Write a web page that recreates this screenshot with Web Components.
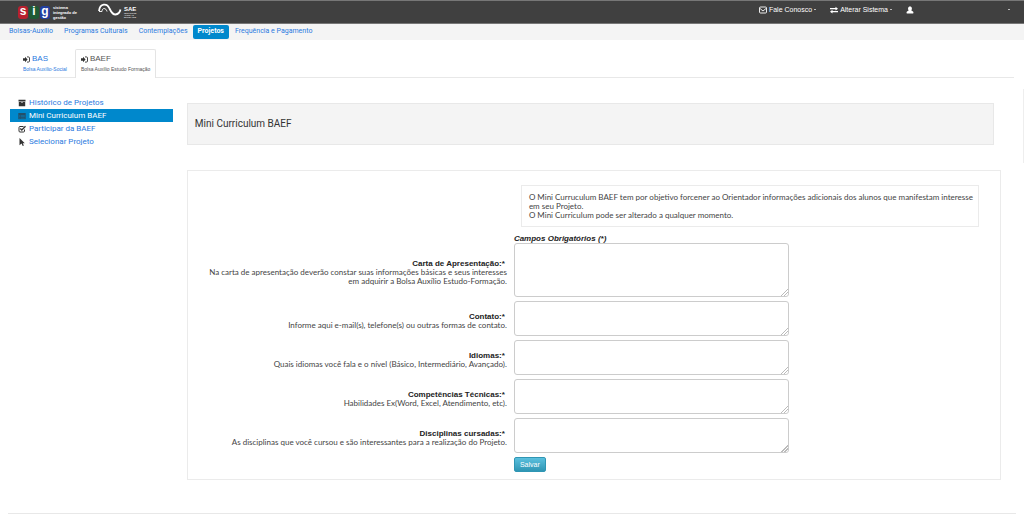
<!DOCTYPE html>
<html lang="pt-BR">
<head>
<meta charset="utf-8">
<title>SIG - Mini Curriculum BAEF</title>
<style>
body{margin:0;background:#fff;color:#444;font:8px/9px Roboto,Arial,sans-serif}
main{display:grid;grid-template-columns:1fr 5fr;gap:14px;padding:0 23px 0 10px;margin-top:11px;background:linear-gradient(#eee,#eee) right top/1px 74px no-repeat}
side-menu{margin-top:7px}
section{padding-top:14px}
hr{border:0;border-top:1px solid #e8e8e8;margin:33px 8px 0}
</style>
</head>
<body>
<sig-header></sig-header>
<sig-nav></sig-nav>
<sig-tabs>
  <sig-tab name="BAS">Bolsa Auxílio-Social</sig-tab>
  <sig-tab name="BAEF" active>Bolsa Auxílio Estudo Formação</sig-tab>
</sig-tabs>
<main>
  <side-menu></side-menu>
  <section>
    <page-title>Mini Curriculum BAEF</page-title>
    <curriculum-form>
      <info-note slot="note">O Mini Curruculum BAEF tem por objetivo forcener ao Orientador informações adicionais dos alunos que manifestam interesse<br>em seu Projeto.<br>O Mini Curriculum pode ser alterado a qualquer momento.</info-note>
      <form-field label="Carta de Apresentação:" tall>Na carta de apresentação deverão constar suas informações básicas e seus interesses<br>em adquirir a Bolsa Auxílio Estudo-Formação.</form-field>
      <form-field label="Contato:">Informe aqui e-mail(s), telefone(s) ou outras formas de contato.</form-field>
      <form-field label="Idiomas:">Quais idiomas você fala e o nível (Básico, Intermediário, Avançado).</form-field>
      <form-field label="Competências Técnicas:">Habilidades Ex(Word, Excel, Atendimento, etc).</form-field>
      <form-field label="Disciplinas cursadas:">As disciplinas que você cursou e são interessantes para a realização do Projeto.</form-field>
    </curriculum-form>
  </section>
</main>
<hr>
<script>
const define = (name, html, setup) => customElements.define(name, class extends HTMLElement {
  constructor() {
    super();
    this.attachShadow({mode: 'open'}).innerHTML = html;
  }
  connectedCallback() { if (setup) setup(this, this.shadowRoot); }
});

define('sig-header', `
<style>
:host{display:flex;align-items:flex-start;height:22px;background:#404040;border-top:1px solid #777;border-bottom:1px solid #777;color:#fff;font:7px/9px "Liberation Sans",Arial,sans-serif}
.logo{display:flex;align-items:center;gap:3px;margin:3px 0 0 18px;height:16px}
.tiles{display:flex;gap:1px;font:bold 12px/11px "Liberation Sans",Arial,sans-serif}
.tiles span{width:10px;height:13px;text-align:center;border-radius:3px}
.tiles span:nth-child(1){background:#b8202e}
.tiles span:nth-child(2){background:#1d5b35}
.tiles span:nth-child(3){background:#2340a0}
.name{font:bold 4px/5px "Liberation Sans",Arial,sans-serif}
.saf{gap:2px;margin:1px 0 0 21px}
.saf svg{width:24px;height:14px}
.saf div{padding-top:4px}
.saf b{display:block;font-size:6px;line-height:6px}
.saf small{display:block;font-size:2px;line-height:2px}
nav{display:flex;margin-left:auto;padding:4px 14px 0 0}
a{color:inherit;text-decoration:none;display:flex;align-items:center;gap:2px;height:9px}
a svg{width:8px;height:8px}
.sys{margin-left:14px}.user{margin-left:14px}.more{margin-left:94px}
i{width:2px;height:1px;background:#bbb}
</style>
<div class="logo"><div class="tiles"><span>s</span><span>i</span><span>g</span></div><div class="name">sistema<br>integrado de<br>gestão</div></div>
<div class="logo saf"><svg viewBox="0 0 24 14" fill="none" stroke="#fff"><path stroke-width="1.800" d="M1 8C2 0 9 0 11.500 5.500c1.500 3 2.500 6 6 6q4-.5 5-5"/><path d="M1 8.500h3c0-4 4-4 5 0" stroke-width=".9"/></svg><div><b>SAE</b><small>SERVIÇO DE<br>APOIO AO<br>ESTUDANTE</small></div></div>
<nav>
<a href="#"><svg viewBox="0 0 8 8" fill="none" stroke="#fff" stroke-width=".9"><rect x=".5" y="1" width="7" height="6" rx="1"/><path d="M1 2.500 4 5l3-2.500"/></svg>Fale Conosco<i></i></a>
<a href="#" class="sys"><svg viewBox="0 0 8 8" fill="#fff"><path d="M0 2h5.500V.7L8 2.700 5.500 4.400V3.200H0zM8 5H2.500V3.800L0 5.700l2.500 1.900V6.300H8z"/></svg>Alterar Sistema<i></i></a>
<a href="#" class="user" aria-label="Usuário"><svg viewBox="0 0 8 8" fill="#fff"><path d="M4 .5c2.300 0 2.300 2.800 1.300 4L7 5.600c.6.400.6 1.900 0 1.900H1c-.6 0-.6-1.500 0-1.900l1.700-1.100C1.700 3.300 1.700.5 4 .5z"/></svg></a>
<a href="#" class="more" aria-label="Mais"><i></i></a>
</nav>`);

define('sig-nav', `
<style>
:host{display:block;background:#f4f4f4;padding:1px 3px;font-size:7px}
nav{display:flex}
a{padding:2px 5px 3px 6px;color:#2a7ae0;text-decoration:none}
.on{background:#0088cc;color:#fff;font-weight:bold;border-radius:2px;padding:2px 5px 3px}
</style>
<nav><a href="#">Bolsas-Auxílio</a><a href="#">Programas Culturais</a><a href="#">Contemplações</a><a href="#" class="on">Projetos</a><a href="#">Frequência e Pagamento</a></nav>`);

define('sig-tabs', `
<style>
:host{display:flex;gap:2px;margin:9px 10px 0 0;padding:0 17px;background:linear-gradient(#e8e8e8,#e8e8e8) 0 100%/100% 1px no-repeat}
</style><slot></slot>`);

define('sig-tab', `
<style>
:host{display:block;border:1px solid transparent;border-bottom:0;border-radius:2px 2px 0 0;font-family:"Liberation Sans",Arial,sans-serif}
:host([active]){background:#fff;border-color:#e4e4e4}
a{display:block;padding:4px 5px;color:#2a7ae0;text-decoration:none;font-size:5px;line-height:10px}
:host([active]) a{color:#555}
b{display:flex;align-items:center;gap:2px;font-size:8px;line-height:10px;font-weight:normal}
svg{width:7px;height:7px}
</style>
<a href="#"><b><svg viewBox="0 0 7 7"><path fill="#333" d="M0 2.300h2V.8l2.600 2.700L2 6.200V4.700H0z"/><path fill="none" stroke="#333" stroke-width=".9" d="M4 .9h1.300q1.200 0 1.200 1.100v3q0 1.100-1.200 1.100H4"/></svg><span></span></b><slot></slot></a>`,
(el, root) => { root.querySelector('span').textContent = el.getAttribute('name'); });

define('side-menu', `
<style>
:host{display:block}
ul{list-style:none;margin:0;padding:0}
a{display:flex;align-items:center;gap:3px;padding:2px 8px;color:#2a7ae0;text-decoration:none}
.on{background:#0088cc;color:#fff}
svg{width:8px;height:8px;fill:#333}
</style>
<ul>
<li><a href="#"><svg viewBox="0 0 8 8"><path d="M.5.8h7v1.800h-7zM.8 3h6.400v4.300H.8z"/><path fill="#fff" d="M3 3.500h2v.6H3z"/></svg>Histórico de Projetos</a></li>
<li><a href="#" class="on"><svg viewBox="0 0 8 8"><path fill="#24506a" d="M.3 1h7.400v6.200H.3z"/><path fill="#0e70a4" d="M1.200 3h1v.7h-1zm1.600 0h4v.7h-4zM1.200 4.300h1V5h-1zm1.600 0h4V5h-4zM1.200 5.700h1v.7h-1zm1.600 0h4v.7h-4z"/></svg>Mini Curriculum BAEF</a></li>
<li><a href="#"><svg viewBox="0 0 8 8"><path fill="none" stroke="#333" d="M6.500 4.500V6q0 1-1 1H2Q1 7 1 6V2.500q0-1 1-1h3.500"/><path fill="none" stroke="#333" stroke-width="1.300" d="m2.300 3.500 1.500 1.500L7.500 1.300"/></svg>Participar da BAEF</a></li>
<li><a href="#"><svg viewBox="0 0 8 8"><path d="M1.500 0 6.800 5.200H4.700L5.900 7.600l-1.200.4-1.100-2.400-2.100 1.700z"/></svg>Selecionar Projeto</a></li>
</ul>`);

define('page-title', `
<style>
:host{display:block;margin-right:7px;border:1px solid #e8e8e8;background:#f4f4f4}
h1{margin:0;padding:14px 7px;font-size:10px;line-height:12px;font-weight:normal;color:#333}
</style><h1><slot></slot></h1>`);

define('info-note', `
<style>
:host{display:block;border:1px solid #ebebeb;padding:7px 0 6px 7px}
</style><slot></slot>`);

define('form-field', `
<style>
:host{display:grid;grid-template-columns:2fr 3fr;align-items:center;margin-bottom:4px}
label{padding:4px 7px 0 0;text-align:right}
b{color:#222;margin-right:2px;font-family:"Liberation Sans",Arial,sans-serif}
textarea{box-sizing:border-box;display:block;width:100%;max-width:275px;height:35px;margin:0;padding:3px;border:1px solid #ccc;border-radius:3px;background:#fff;font:inherit;resize:vertical}
textarea::-webkit-resizer{background:linear-gradient(135deg,transparent 76%,#bbb 76% 80%,transparent 80% 86%,#bbb 86% 90%,transparent 90%)}
:host([tall]) textarea{height:54px}
</style>
<label for="box"><b></b><br><slot></slot></label><textarea id="box"></textarea>`,
(el, root) => { root.querySelector('b').textContent = el.getAttribute('label') + '*'; });

define('curriculum-form', `
<style>
:host{display:block;margin-top:25px;border:1px solid #ebebeb;font-family:Lato,Arial,sans-serif;font-size:8px}
form{padding:14px 0 7px 2px}
.row{margin-left:40%}
.note{margin-left:calc(40% + 7px);margin-right:21px}
.req{margin-top:7px;color:#222;font-family:"Liberation Sans",Arial,sans-serif;font-weight:bold;font-style:italic}
button{display:block;height:15px;padding:0 5px;border:1px solid #2f96b4;border-radius:2px;background:linear-gradient(#5bc0de,#2f96b4);color:#fff;font:7px/9px "Liberation Sans",Arial,sans-serif}
</style>
<form><div class="note"><slot name="note"></slot></div><div class="row req">Campos Obrigatórios (*)</div><slot></slot><div class="row"><button type="button">Salvar</button></div></form>`);
</script>
</body>
</html>
